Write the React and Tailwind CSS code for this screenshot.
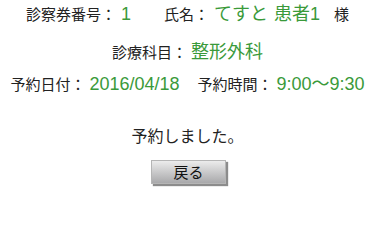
const label = "text-[15px] text-[#222]";
const val = "text-[18px] text-[#3a9a3a]";

export default function App() {
  return (
    <div
      className="w-[385px] h-[207px] bg-white flex flex-col items-center pr-[10px]"
      style={{ fontFamily: '"Liberation Sans", "Noto Sans CJK JP", sans-serif' }}
    >
      <div className="flex items-baseline mt-[3px] leading-[22px]">
        <span className={label}>診察券番号：</span>
        <span className={`${val} ml-[5px]`}>1</span>
        <span className={`${label} ml-[33px]`}>氏名：</span>
        <span className={`${val} ml-[5px]`}>てすと</span>
        <span className={`${val} ml-[6px]`}>患者1</span>
        <span className={`${label} ml-[14px]`}>様</span>
      </div>

      <div className="flex items-baseline mt-[15px] leading-[22px]">
        <span className={label}>診療科目：</span>
        <span className={`${val} ml-[4px]`}>整形外科</span>
      </div>

      <div className="flex items-baseline mt-[9px] leading-[22px]">
        <span className={label}>予約日付：</span>
        <span className={`${val} ml-[4px]`}>2016/04/18</span>
        <span className={`${label} ml-[18px]`}>予約時間：</span>
        <span className={`${val} ml-[4px]`}>9:00〜9:30</span>
      </div>

      <p className="mt-[30px] text-[16px] leading-[22px] text-[#222]">予約しました。</p>

      <button className="mt-[12px] ml-[2px] w-[75px] h-[24px] text-[15px] leading-none text-[#111] bg-gradient-to-b from-[#ececec] to-[#a9a9ab] border border-[#b5b5b5] shadow-[2px_2px_1px_rgba(0,0,0,0.45)]">
        戻る
      </button>
    </div>
  );
}
